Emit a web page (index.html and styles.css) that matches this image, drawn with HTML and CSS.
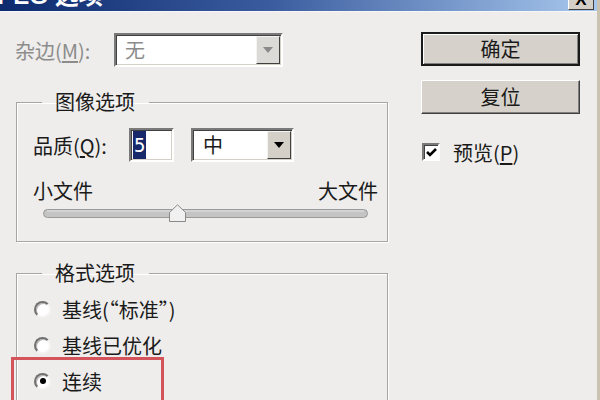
FILE: index.html
```html
<!DOCTYPE html>
<html lang="zh">
<head>
<meta charset="utf-8">
<link rel="stylesheet" href="styles.css">
</head>
<body>
<div class="window">
  <div class="titlebar">
    <span class="title">JPEG 选项</span>
    <span class="close">X</span>
  </div>
  <div class="content">
    <div class="left">
      <div class="matte-row">
        <span class="label disabled-text">杂边(<u>M</u>):</span>
        <div class="select matte-select">
          <span class="select-text disabled-text">无</span>
          <span class="drop drop-disabled"><svg width="10" height="6" viewBox="0 0 10 6"><path d="M0 0h10L5 6z" fill="#8a8a8a"/></svg></span>
        </div>
      </div>

      <fieldset class="group group-image">
        <legend>图像选项</legend>
        <div class="quality-row">
          <span class="label q-label">品质(<u>Q</u>):</span>
          <div class="input q-input"><span class="sel-text">5</span></div>
          <div class="select q-select">
            <span class="select-text">中</span>
            <span class="drop"><svg width="10" height="6" viewBox="0 0 10 6"><path d="M0 0h10L5 6z" fill="#000"/></svg></span>
          </div>
        </div>
        <div class="size-labels"><span>小文件</span><span>大文件</span></div>
        <div class="slider">
          <svg width="326" height="18" viewBox="0 0 326 18">
            <rect x="0.5" y="5.5" width="324" height="8" rx="4" fill="#c4c4c4" stroke="#9a9a9a"/>
            <line x1="4" y1="7" x2="321" y2="7" stroke="#e2e2e2"/>
            <path d="M126.5 17.5 V8.5 L134.5 0.8 L142.5 8.5 V17.5 Z" fill="#f0f0f0" stroke="#8a8a8a"/>
          </svg>
        </div>
      </fieldset>

      <fieldset class="group group-format">
        <legend>格式选项</legend>
        <div class="radio-row"><span class="radio"></span><span>基线(“标准”)</span></div>
        <div class="radio-row"><span class="radio"></span><span>基线已优化</span></div>
        <div class="radio-row highlighted"><span class="radio checked"></span><span>连续</span></div>
      </fieldset>
    </div>

    <div class="right">
      <div class="button default-button">确定</div>
      <div class="button">复位</div>
      <div class="check-row">
        <span class="checkbox"><svg width="13" height="13" viewBox="0 0 13 13"><path d="M2 6 L5 9 L11 3" stroke="#000" stroke-width="2.6" fill="none"/></svg></span>
        <span>预览(<u>P</u>)</span>
      </div>
    </div>
  </div>
</div>
</body>
</html>
```

FILE: styles.css
```css
* { box-sizing: border-box; }

html, body {
  margin: 0;
  padding: 0;
}

body {
  width: 600px;
  height: 400px;
  overflow: hidden;
  background: #eeedeb;
  font-family: "Noto Sans CJK SC", "Noto Sans", sans-serif;
  font-size: 20px;
  color: #1a1a1a;
}

.window {
  width: 600px;
  height: 400px;
  border-right: 3px solid #cbc3b2;
  overflow: hidden;
}

.titlebar {
  height: 12px;
  background: linear-gradient(to right, #0d2a6e 0%, #3a5c9e 45%, #a8c8ee 100%);
  position: relative;
  overflow: hidden;
  border-bottom: 1px solid #f7f7f7;
}

.title {
  display: block;
  margin-left: -16px;
  margin-top: -18px;
  font-family: "Liberation Sans", "Noto Sans CJK SC", sans-serif;
  font-weight: bold;
  font-size: 24px;
  line-height: 28px;
  color: #fff;
}

.close {
  position: absolute;
  left: 568px;
  top: -12px;
  width: 26px;
  height: 22px;
  background: #d4d0c8;
  border: 1px solid #fff;
  border-right-color: #404040;
  border-bottom-color: #404040;
  font-family: "Liberation Sans", sans-serif;
  font-weight: bold;
  font-size: 17px;
  line-height: 22px;
  text-align: center;
  color: #000;
}

.content {
  display: flex;
}

.left {
  width: 392px;
  padding-left: 15px;
}

.label u, .check-row u { text-decoration: underline; text-underline-offset: 2px; }

.disabled-text { color: #8c8c8c; }

.matte-row {
  margin-top: 21px;
  height: 34px;
  display: flex;
  align-items: center;
}

.matte-row .label {
  width: 99px;
}

.select, .input {
  height: 34px;
  background: #fff;
  border: 2px solid;
  border-color: #7a7a7a #fff #fff #7a7a7a;
  box-shadow: inset 1px 1px 0 #404040, inset -1px -1px 0 #d4d0c8;
  display: flex;
  align-items: center;
}

.matte-select {
  width: 169px;
}

.select-text {
  flex: 1;
  padding-left: 9px;
  line-height: 28px;
}

.drop {
  width: 24px;
  height: 28px;
  margin-right: 1px;
  background: #d4d0c8;
  border: 1px solid;
  border-color: #f4f4f4 #404040 #404040 #f4f4f4;
  display: flex;
  align-items: center;
  justify-content: center;
}

.drop-disabled {
  background: #dcdad6;
}

.group {
  margin: 0 0 0 1px;
  padding: 0;
  width: 372px;
  border: 1px solid #a5a5a5;
  box-shadow: inset 1px 1px 0 #fff, 1px 1px 0 #fff;
}

.group legend {
  padding: 0 14px 0 13px;
  line-height: 24px;
  font-size: 20px;
}

.group-image {
  margin-top: 23px;
  height: 152px;
  padding-left: 16px;
}

.group-image legend {
  margin-left: 9px;
}

.quality-row {
  margin-top: 14px;
  display: flex;
  align-items: center;
}

.q-label {
  width: 96px;
}

.q-input {
  width: 45px;
  padding-left: 2px;
}

.sel-text {
  background: #17296a;
  color: #fff;
  font-family: "DejaVu Sans Mono", monospace;
  font-size: 19px;
  line-height: 28px;
  padding: 0 1px;
}

.q-select {
  width: 103px;
  margin-left: 17px;
}

.q-select .select-text {
  padding-left: 10px;
}

.size-labels {
  margin-top: 18px;
  width: 345px;
  display: flex;
  justify-content: space-between;
  line-height: 22px;
}

.slider {
  margin-top: 2px;
  margin-left: 10px;
  height: 18px;
}

.slider svg { display: block; }

.group-format {
  margin-top: 19px;
  height: 200px;
  padding-left: 18px;
}

.group-format legend {
  margin-left: 7px;
}

.radio-row {
  display: flex;
  align-items: center;
  height: 36px;
  gap: 11px;
}

.radio-row:first-of-type {
  margin-top: 6px;
}

.radio {
  width: 17px;
  height: 17px;
  border-radius: 50%;
  background: #fff;
  border: 2px solid;
  border-color: #707070 #f4f4f4 #f4f4f4 #707070;
  box-shadow: inset 1px 1px 0 #b8b8b8;
  position: relative;
  margin-left: -1px;
}

.radio.checked::after {
  content: "";
  position: absolute;
  left: 3.5px;
  top: 3.5px;
  width: 6px;
  height: 6px;
  border-radius: 50%;
  background: #000;
}

.highlighted {
  position: relative;
}

.highlighted::after {
  content: "";
  position: absolute;
  left: -24px;
  top: -6px;
  width: 147px;
  height: 48px;
  border: 3px solid #d4545c;
}

.right {
  width: 159px;
  margin-left: 29px;
}

.button {
  height: 34px;
  background: #d6d2cb;
  border: 1px solid;
  border-color: #fff #404040 #404040 #fff;
  box-shadow: inset -1px -1px 0 #808080;
  text-align: center;
  line-height: 31px;
  margin-top: 14px;
}

.default-button {
  margin-top: 20px;
  border: 2px solid #1a1a1a;
  box-shadow: inset 1px 1px 0 #fff, inset -1px -1px 0 #808080;
  line-height: 29px;
}

.check-row {
  margin-top: 29px;
  margin-left: 1px;
  display: flex;
  align-items: center;
  gap: 13px;
  height: 18px;
}

.checkbox {
  width: 18px;
  height: 18px;
  background: #fff;
  border: 2px solid;
  border-color: #7a7a7a #fff #fff #7a7a7a;
  box-shadow: inset 1px 1px 0 #404040;
  display: flex;
  align-items: center;
  justify-content: center;
}
```
